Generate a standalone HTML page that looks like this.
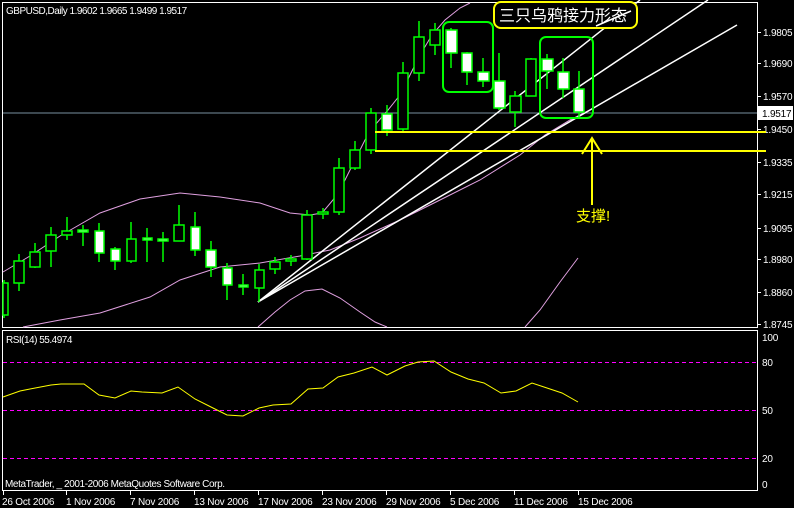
<!DOCTYPE html>
<html><head><meta charset="utf-8"><style>
html,body{margin:0;padding:0;background:#000;width:794px;height:508px;overflow:hidden}
svg{display:block}
text{font-family:"Liberation Sans","Noto Sans CJK SC",sans-serif;font-size:10px;fill:#fff;letter-spacing:-0.2px}
</style></head><body>
<svg width="794" height="508" viewBox="0 0 794 508" xmlns="http://www.w3.org/2000/svg">
<rect width="794" height="508" fill="#000"/>
<rect x="2.5" y="2.5" width="755" height="325" fill="none" stroke="#fff"/>
<rect x="2.5" y="330.5" width="755" height="160" fill="none" stroke="#fff"/>
<g stroke="#fff">
<line x1="757" y1="32.5" x2="761" y2="32.5"/><line x1="757" y1="63.5" x2="761" y2="63.5"/>
<line x1="757" y1="96.5" x2="761" y2="96.5"/><line x1="757" y1="129.5" x2="761" y2="129.5"/>
<line x1="757" y1="162.5" x2="761" y2="162.5"/><line x1="757" y1="194.5" x2="761" y2="194.5"/>
<line x1="757" y1="228.5" x2="761" y2="228.5"/><line x1="757" y1="259.5" x2="761" y2="259.5"/>
<line x1="757" y1="292.5" x2="761" y2="292.5"/><line x1="757" y1="324.5" x2="761" y2="324.5"/>
</g>
<g>
<text x="763" y="36">1.9805</text><text x="763" y="67">1.9690</text><text x="763" y="100">1.9570</text>
<text x="763" y="133">1.9450</text><text x="763" y="166">1.9335</text><text x="763" y="198">1.9215</text>
<text x="763" y="232">1.9095</text><text x="763" y="263">1.8980</text><text x="763" y="296">1.8860</text>
<text x="763" y="328">1.8745</text>
</g>
<line x1="3" y1="113" x2="757" y2="113" stroke="#7890a0"/>
<rect x="758" y="106" width="35" height="14" fill="#fff"/>
<text x="762" y="117" style="fill:#000">1.9517</text>
<text x="6" y="14" style="letter-spacing:-0.5px">GBPUSD,Daily  1.9602 1.9665 1.9499 1.9517</text>
<g fill="none" stroke="#e0a0e0" stroke-width="1">
<polyline points="3,272 30,256 60,236 100,213 140,199 180,193 220,197 260,203 290,213 310,215 322,213 333,200 345,180 355,160 365,140 375,125 388,110 400,95 410,75 420,55 432,35 445,20 460,8 470,3"/>
<polyline points="23,327 60,320 100,313 150,297 180,280 220,267 260,263 300,256 330,250 360,238 400,220 440,200 480,180 520,155 545,135 570,120 590,110"/>
<polyline points="258,327 275,312 290,300 305,291 322,289 340,298 360,312 375,322 387,327"/>
<polyline points="525,327 540,310 560,282 578,258"/>
</g>
<g stroke="#fff" stroke-width="1.5">
<line x1="258" y1="302" x2="640" y2="0"/>
<line x1="258" y1="302" x2="708" y2="0"/>
<line x1="258" y1="302" x2="737" y2="25"/>
</g>
<g stroke="#00ff00" stroke-width="1.5">
<line x1="19" y1="254" x2="19" y2="291"/><line x1="35" y1="243" x2="35" y2="268"/>
<line x1="51" y1="227" x2="51" y2="267"/><line x1="67" y1="217" x2="67" y2="240"/>
<line x1="83" y1="225" x2="83" y2="246"/><line x1="99" y1="223" x2="99" y2="262"/>
<line x1="115" y1="247" x2="115" y2="270"/><line x1="131" y1="222" x2="131" y2="263"/>
<line x1="147" y1="228" x2="147" y2="262"/><line x1="163" y1="232" x2="163" y2="262"/>
<line x1="179" y1="205" x2="179" y2="241"/><line x1="195" y1="212" x2="195" y2="256"/>
<line x1="211" y1="241" x2="211" y2="277"/><line x1="227" y1="263" x2="227" y2="300"/>
<line x1="243" y1="274" x2="243" y2="295"/><line x1="259" y1="264" x2="259" y2="302"/>
<line x1="275" y1="257" x2="275" y2="274"/><line x1="291" y1="255" x2="291" y2="266"/>
<line x1="307" y1="210" x2="307" y2="260"/><line x1="323" y1="208" x2="323" y2="219"/>
<line x1="339" y1="158" x2="339" y2="215"/><line x1="355" y1="141" x2="355" y2="170"/>
<line x1="371" y1="108" x2="371" y2="154"/><line x1="387" y1="105" x2="387" y2="136"/>
<line x1="403" y1="62" x2="403" y2="131"/><line x1="419" y1="21" x2="419" y2="81"/>
<line x1="435" y1="23" x2="435" y2="55"/><line x1="451" y1="28" x2="451" y2="68"/>
<line x1="467" y1="52" x2="467" y2="85"/><line x1="483" y1="58" x2="483" y2="87"/>
<line x1="499" y1="53" x2="499" y2="110"/><line x1="515" y1="91" x2="515" y2="127"/>
<line x1="531" y1="58" x2="531" y2="96"/><line x1="547" y1="54" x2="547" y2="89"/>
<line x1="563" y1="58" x2="563" y2="98"/><line x1="579" y1="71" x2="579" y2="117"/>
<line x1="4" y1="280" x2="4" y2="318"/>
</g>
<g stroke="#00ff00" stroke-width="1.5" fill="#000">
<rect x="3" y="283" width="5" height="32"/>
<rect x="14" y="261" width="10" height="22"/><rect x="30" y="252" width="10" height="15"/>
<rect x="46" y="235" width="10" height="16"/><rect x="62" y="231" width="10" height="4"/>
<rect x="127" y="239" width="9" height="22"/><rect x="174" y="225" width="10" height="16"/>
<rect x="255" y="270" width="9" height="18"/><rect x="270" y="262" width="10" height="7"/>
<rect x="286" y="259" width="10" height="2"/><rect x="302" y="215" width="10" height="44"/>
<rect x="318" y="212" width="10" height="2"/><rect x="334" y="168" width="10" height="44"/>
<rect x="350" y="150" width="10" height="18"/><rect x="366" y="113" width="10" height="37"/>
<rect x="398" y="73" width="10" height="56"/><rect x="414" y="37" width="10" height="36"/>
<rect x="430" y="30" width="10" height="15"/><rect x="510" y="96" width="11" height="16"/>
<rect x="526" y="59" width="10" height="37"/>
</g>
<g stroke="#00ff00" stroke-width="1.5" fill="#fff">
<rect x="78" y="230" width="10" height="2"/><rect x="95" y="231" width="9" height="22"/>
<rect x="111" y="249" width="9" height="12"/><rect x="143" y="238" width="9" height="2"/>
<rect x="158" y="239" width="10" height="2"/><rect x="191" y="227" width="9" height="23"/>
<rect x="206" y="250" width="10" height="17"/><rect x="223" y="268" width="9" height="17"/>
<rect x="239" y="285" width="9" height="2"/><rect x="382" y="114" width="10" height="16"/>
<rect x="446" y="30" width="11" height="23"/><rect x="462" y="53" width="10" height="19"/>
<rect x="478" y="72" width="11" height="9"/><rect x="494" y="81" width="11" height="27"/>
<rect x="542" y="59" width="11" height="12"/><rect x="558" y="72" width="11" height="17"/>
<rect x="574" y="89" width="10" height="23"/>
</g>
<rect x="443" y="22" width="50" height="70" rx="6" fill="none" stroke="#00ff00" stroke-width="2"/>
<rect x="540" y="37" width="53" height="81" rx="6" fill="none" stroke="#00ff00" stroke-width="2"/>
<rect x="494" y="2" width="143" height="26" rx="7" fill="#000" stroke="#ffff00" stroke-width="2"/>
<text x="499" y="21" style="font-size:16px;fill:#fff;letter-spacing:0">三只乌鸦接力形态</text>
<line x1="596" y1="26" x2="631" y2="11" stroke="#fff" stroke-width="1.5"/>
<g stroke="#ffff00" stroke-width="2" fill="none">
<line x1="375" y1="132" x2="766" y2="132"/>
<line x1="375" y1="151" x2="766" y2="151"/>
<line x1="592" y1="138" x2="592" y2="205"/>
<polyline points="582,154 592,138 602,154"/>
</g>
<text x="576" y="221" style="font-size:15px;fill:#ffff00;letter-spacing:0">支撑!</text>
<text x="6" y="343" style="letter-spacing:-0.5px">RSI(14) 55.4974</text>
<g stroke="#ff00ff" stroke-dasharray="4,3" stroke-width="1">
<line x1="3" y1="362.5" x2="757" y2="362.5"/>
<line x1="3" y1="410.5" x2="757" y2="410.5"/>
<line x1="3" y1="458.5" x2="757" y2="458.5"/>
</g>
<polyline fill="none" stroke="#ffff00" stroke-width="1" points="3,397 20,391 30,389 51,385 61,384 84,384 99,395 115,398 131,391 142,392 162,393 178,387 195,399 213,408 227,415 243,416 259,408 273,405 291,404 308,389 323,388 338,377 354,373 372,367 387,375 405,366 418,362 434,361 451,372 468,379 484,383 501,393 516,391 532,383 544,387 562,393 578,402"/>
<text x="762" y="341">100</text><text x="762" y="366">80</text><text x="762" y="414">50</text>
<text x="762" y="462">20</text><text x="762" y="488">0</text>
<text x="5" y="487" style="letter-spacing:-0.4px">MetaTrader, _ 2001-2006 MetaQuotes Software Corp.</text>
<g stroke="#fff">
<line x1="3.5" y1="491" x2="3.5" y2="495"/><line x1="66.5" y1="491" x2="66.5" y2="495"/>
<line x1="130.5" y1="491" x2="130.5" y2="495"/><line x1="194.5" y1="491" x2="194.5" y2="495"/>
<line x1="258.5" y1="491" x2="258.5" y2="495"/><line x1="322.5" y1="491" x2="322.5" y2="495"/>
<line x1="386.5" y1="491" x2="386.5" y2="495"/><line x1="450.5" y1="491" x2="450.5" y2="495"/>
<line x1="514.5" y1="491" x2="514.5" y2="495"/><line x1="578.5" y1="491" x2="578.5" y2="495"/>
</g>
<g style="letter-spacing:-0.4px">
<text x="2" y="505">26 Oct 2006</text><text x="66" y="505">1 Nov 2006</text>
<text x="130" y="505">7 Nov 2006</text><text x="194" y="505">13 Nov 2006</text>
<text x="258" y="505">17 Nov 2006</text><text x="322" y="505">23 Nov 2006</text>
<text x="386" y="505">29 Nov 2006</text><text x="450" y="505">5 Dec 2006</text>
<text x="514" y="505">11 Dec 2006</text><text x="578" y="505">15 Dec 2006</text>
</g>
</svg>
</body></html>
